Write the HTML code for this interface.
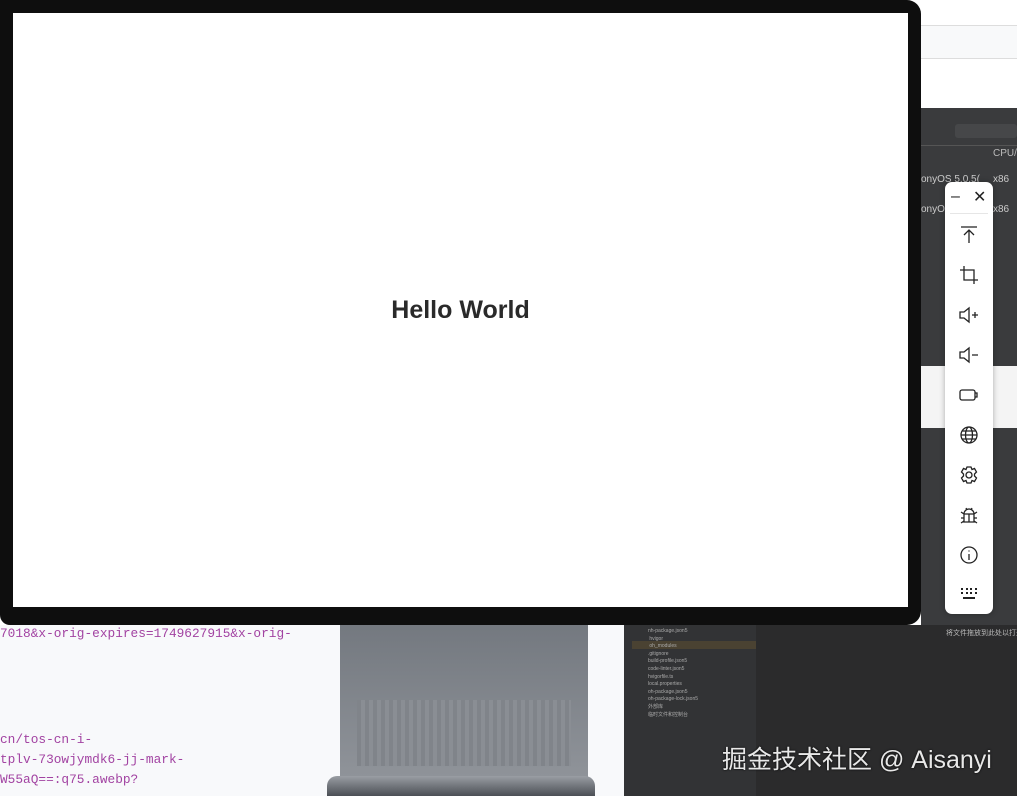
<!DOCTYPE html>
<html><head><meta charset="utf-8"><style>
*{margin:0;padding:0;box-sizing:border-box}
body{width:1017px;height:796px;position:relative;overflow:hidden;background:#fff;font-family:"Liberation Sans","Noto Sans CJK SC",sans-serif}
.a{position:absolute;white-space:nowrap}
.ic{position:absolute;left:958px;width:22px;height:22px}
.ic svg{width:22px;height:22px;fill:none;stroke:#222;stroke-width:1.3}
.mono{font-family:"Liberation Mono",monospace;font-size:12.8px;color:#a243a2;position:absolute;left:0}
</style></head><body>
<div class="a" style="left:921px;top:25px;width:96px;height:34px;background:#f8f9fa;border-top:1px solid #ddd;border-bottom:1px solid #ddd"></div>
<div class="a" style="left:921px;top:108px;width:96px;height:688px;background:#3a3b3d"></div>
<div class="a" style="left:921px;top:145px;width:96px;height:1px;background:#555"></div>
<div class="a" style="left:955px;top:124px;width:62px;height:14px;background:#464749;border-radius:3px"></div>
<div class="a" style="left:993px;top:148px;font-size:10px;color:#bbb">CPU/</div>
<div class="a" style="left:921px;top:174px;font-size:10px;color:#ccc">onyOS 5.0.5(</div>
<div class="a" style="left:993px;top:174px;font-size:10px;color:#ccc">x86</div>
<div class="a" style="left:921px;top:204px;font-size:10px;color:#ccc">onyOS</div>
<div class="a" style="left:993px;top:204px;font-size:10px;color:#ccc">x86</div>
<div class="a" style="left:921px;top:366px;width:96px;height:62px;background:#f4f4f4"></div>
<div class="a" style="left:0;top:625px;width:624px;height:171px;background:#f8f9fb"></div>
<div class="mono" style="top:626px">7018&amp;x-orig-expires=1749627915&amp;x-orig-</div>
<div class="mono" style="top:732px">cn/tos-cn-i-</div>
<div class="mono" style="top:752px">tplv-73owjymdk6-jj-mark-</div>
<div class="mono" style="top:772px">W55aQ==:q75.awebp?</div>
<div class="a" style="left:340px;top:622px;width:248px;height:160px;background:linear-gradient(#73787f,#90949a);border-radius:0 0 4px 4px"></div>
<div class="a" style="left:357px;top:700px;width:214px;height:66px;background:repeating-linear-gradient(90deg,#80848a 0 4px,#8a8e94 4px 8px)"></div>
<div class="a" style="left:327px;top:776px;width:268px;height:20px;background:linear-gradient(#9a9ea4,#4b4f55);border-radius:10px 10px 0 0"></div>
<div class="a" style="left:624px;top:625px;width:393px;height:171px;background:#2b2b2c"></div>
<div class="a" style="left:624px;top:625px;width:132px;height:171px;background:#323335"></div>
<div class="a" style="left:632px;top:641px;width:124px;height:8px;background:#4a4232"></div>
<div class="a" style="left:648px;top:628px;font-size:5px;color:#aaa;line-height:7.6px">nh-package.json5<br>&nbsp;hvigor<br>&nbsp;oh_modules<br>.gitignore<br>build-profile.json5<br>code-linter.json5<br>hvigorfile.ts<br>local.properties<br>oh-package.json5<br>oh-package-lock.json5<br>外部库<br>临时文件和控制台</div>
<div class="a" style="left:946px;top:628px;font-size:7px;color:#bbb">将文件拖放到此处以打开</div>
<div class="a" style="left:722px;top:740px;font-size:25px;color:#e8e8e8;text-shadow:0 0 2px #000">掘金技术社区 @ Aisanyi</div>
<div class="a" style="left:0;top:0;width:921px;height:625px;background:#0e0e0e;border-radius:0 14px 14px 10px"></div>
<div class="a" style="left:13px;top:13px;width:895px;height:594px;background:#fff"></div>
<div class="a" style="left:13px;top:296px;width:895px;text-align:center;font-size:25px;font-weight:bold;color:#2a2a2a">Hello World</div>
<div class="a" style="left:945px;top:182px;width:48px;height:432px;background:#fff;border-radius:7px;box-shadow:0 0 6px rgba(0,0,0,.3)"></div>
<div class="a" style="left:951px;top:188px;font-size:16px;color:#222">–</div>
<div class="a" style="left:973px;top:187px;font-size:16px;color:#222">✕</div>
<div class="a" style="left:950px;top:213px;width:38px;height:1px;background:#e6e6e6"></div>
<div class="ic" style="top:224px"><svg viewBox="0 0 22 22"><path d="M3 3h16M11 19V6M6 11l5-5 5 5"/></svg></div>
<div class="ic" style="top:264px"><svg viewBox="0 0 22 22"><path d="M6 2v14h14M2 6h14v14"/></svg></div>
<div class="ic" style="top:304px"><svg viewBox="0 0 22 22"><path d="M2 8h4l5-4v14l-5-4H2zM14 11h6M17 8v6"/></svg></div>
<div class="ic" style="top:344px"><svg viewBox="0 0 22 22"><path d="M2 8h4l5-4v14l-5-4H2zM14 11h6"/></svg></div>
<div class="ic" style="top:384px"><svg viewBox="0 0 22 22"><rect x="2" y="6" width="15" height="10" rx="2"/><path d="M17 9h2v4h-2"/></svg></div>
<div class="ic" style="top:424px"><svg viewBox="0 0 22 22"><circle cx="11" cy="11" r="8"/><ellipse cx="11" cy="11" rx="3.5" ry="8"/><path d="M3 11h16M4.5 7h13M4.5 15h13"/></svg></div>
<div class="ic" style="top:464px"><svg viewBox="0 0 22 22"><circle cx="11" cy="11" r="3"/><path d="M9 3h4l1 2.5 2.5-1 2 3.5-2 2v2l2 2-2 3.5-2.5-1-1 2.5H9l-1-2.5-2.5 1-2-3.5 2-2v-2l-2-2 2-3.5 2.5 1z"/></svg></div>
<div class="ic" style="top:504px"><svg viewBox="0 0 22 22"><path d="M6 10a5 5 0 0 1 10 0v8H6zM6 10h10M11 10v8M3 8l3 2M19 8l-3 2M3 14h3M16 14h3M3 19l3-2M19 19l-3-2M8 4l1 2M14 4l-1 2"/></svg></div>
<div class="ic" style="top:544px"><svg viewBox="0 0 22 22"><circle cx="11" cy="11" r="8"/><path d="M11 10v6M11 6.5v1"/></svg></div>
<div class="ic" style="top:584px"><svg viewBox="0 0 22 22"><path d="M3 5h2M8 5h2M12 5h2M17 5h2M3 9h2M8 9h2M12 9h2M17 9h2M5 14h12" stroke-width="2"/></svg></div>
</body></html>
